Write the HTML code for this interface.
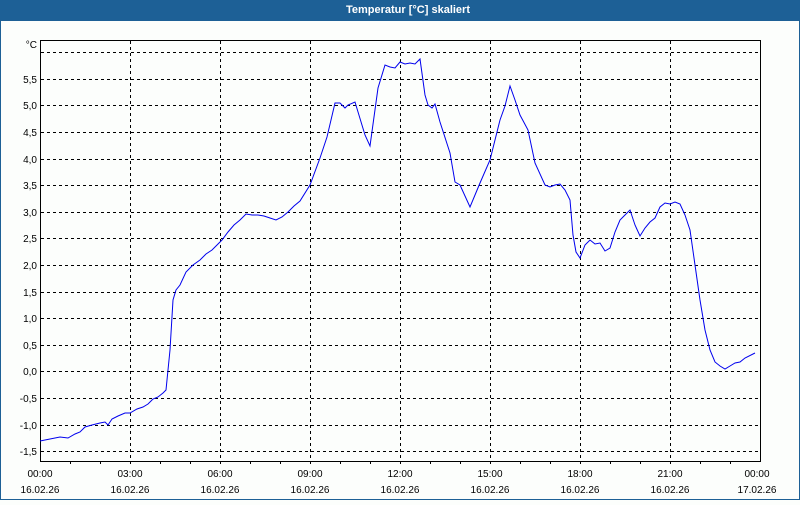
<!DOCTYPE html>
<html><head><meta charset="utf-8"><style>
body{margin:0;width:800px;height:500px;overflow:hidden;background:#fcfefc;font-family:"Liberation Sans",sans-serif}
</style></head><body>
<svg width="800" height="500" xmlns="http://www.w3.org/2000/svg" font-family="Liberation Sans, sans-serif" font-size="10">
<rect x="0" y="0" width="800" height="500" fill="#fcfefc"/>
<rect x="0" y="0" width="800" height="21" fill="#1d6096"/>
<rect x="0" y="0" width="1" height="500" fill="#1d6096"/>
<rect x="799" y="0" width="1" height="500" fill="#1d6096"/>
<rect x="0" y="499" width="800" height="1" fill="#1d6096"/>
<text x="408" y="13" fill="#fff" font-weight="bold" font-size="11" text-anchor="middle">Temperatur [°C] skaliert</text>
<g stroke="#000" stroke-width="1" stroke-dasharray="3,3" shape-rendering="crispEdges">
<line x1="41" x2="760" y1="52.5" y2="52.5"/>
<line x1="41" x2="760" y1="79.5" y2="79.5"/>
<line x1="41" x2="760" y1="105.5" y2="105.5"/>
<line x1="41" x2="760" y1="132.5" y2="132.5"/>
<line x1="41" x2="760" y1="159.5" y2="159.5"/>
<line x1="41" x2="760" y1="185.5" y2="185.5"/>
<line x1="41" x2="760" y1="212.5" y2="212.5"/>
<line x1="41" x2="760" y1="238.5" y2="238.5"/>
<line x1="41" x2="760" y1="265.5" y2="265.5"/>
<line x1="41" x2="760" y1="292.5" y2="292.5"/>
<line x1="41" x2="760" y1="318.5" y2="318.5"/>
<line x1="41" x2="760" y1="345.5" y2="345.5"/>
<line x1="41" x2="760" y1="371.5" y2="371.5"/>
<line x1="41" x2="760" y1="398.5" y2="398.5"/>
<line x1="41" x2="760" y1="425.5" y2="425.5"/>
<line x1="41" x2="760" y1="451.5" y2="451.5"/>
<line x1="130.5" x2="130.5" y1="41" y2="461"/>
<line x1="220.5" x2="220.5" y1="41" y2="461"/>
<line x1="310.5" x2="310.5" y1="41" y2="461"/>
<line x1="400.5" x2="400.5" y1="41" y2="461"/>
<line x1="490.5" x2="490.5" y1="41" y2="461"/>
<line x1="580.5" x2="580.5" y1="41" y2="461"/>
<line x1="670.5" x2="670.5" y1="41" y2="461"/>
</g>
<g stroke="#000" stroke-width="1" shape-rendering="crispEdges" fill="none">
<rect x="40.5" y="40.5" width="720" height="421"/>
<path d="M70.5 461v3M100.5 461v3M130.5 461v3M160.5 461v3M190.5 461v3M220.5 461v3M250.5 461v3M280.5 461v3M310.5 461v3M340.5 461v3M370.5 461v3M400.5 461v3M430.5 461v3M460.5 461v3M490.5 461v3M520.5 461v3M550.5 461v3M580.5 461v3M610.5 461v3M640.5 461v3M670.5 461v3M700.5 461v3M730.5 461v3"/>
</g>
<g fill="#000" text-anchor="end">
<text x="37" y="48">°C</text>
<text x="37" y="83">5,5</text><text x="37" y="109">5,0</text><text x="37" y="136">4,5</text><text x="37" y="163">4,0</text><text x="37" y="189">3,5</text><text x="37" y="216">3,0</text><text x="37" y="242">2,5</text><text x="37" y="269">2,0</text><text x="37" y="296">1,5</text><text x="37" y="322">1,0</text><text x="37" y="349">0,5</text><text x="37" y="375">0,0</text><text x="37" y="402">-0,5</text><text x="37" y="429">-1,0</text><text x="37" y="455">-1,5</text>
</g>
<g fill="#000" text-anchor="middle">
<text x="40" y="477">00:00</text><text x="40" y="493">16.02.26</text>
<text x="130" y="477">03:00</text><text x="130" y="493">16.02.26</text>
<text x="220" y="477">06:00</text><text x="220" y="493">16.02.26</text>
<text x="310" y="477">09:00</text><text x="310" y="493">16.02.26</text>
<text x="400" y="477">12:00</text><text x="400" y="493">16.02.26</text>
<text x="490" y="477">15:00</text><text x="490" y="493">16.02.26</text>
<text x="580" y="477">18:00</text><text x="580" y="493">16.02.26</text>
<text x="670" y="477">21:00</text><text x="670" y="493">16.02.26</text>
<text x="757" y="477">00:00</text><text x="757" y="493">17.02.26</text>
</g>
<polyline fill="none" stroke="#0000ee" stroke-width="1" points="40,441 50,439 60,437 68,438 75,434 80,432 85,427 92,425 100,423 105,422 108,425 112,419 118,416 125,413 130,413 137,409 143,407 148,404 153,399 158,397 163,393 166,390 170,350 173,300 176,290 180,285 186,272 193,265 200,260 206,254 212,250 217,245 222,240 228,232 234,225 240,220 246,214 252,215 258,215 264,216 270,218 276,220 282,217 288,212 294,206 300,201 310,185 320,158 327,137 335,103 340,103 345,108 348,105 355,102 365,135 370,146 378,88 385,65 390,67 395,68 400,62 405,64 410,63 415,64 420,59 425,95 428,105 432,108 435,104 440,122 450,153 455,182 460,185 470,207 475,195 480,183 490,160 500,120 505,106 510,86 515,100 520,115 528,130 535,163 545,185 550,187 555,185 560,184 565,190 570,200 573,235 576,252 580,258 585,245 590,240 595,244 600,243 605,251 610,248 615,232 620,220 626,214 630,210 635,225 640,236 645,228 650,222 655,218 660,207 665,203 670,204 675,202 680,204 685,215 690,230 695,265 700,300 705,330 710,350 715,362 720,366 725,369 730,366 735,363 740,362 745,358 755,353"/>
</svg>
</body></html>
